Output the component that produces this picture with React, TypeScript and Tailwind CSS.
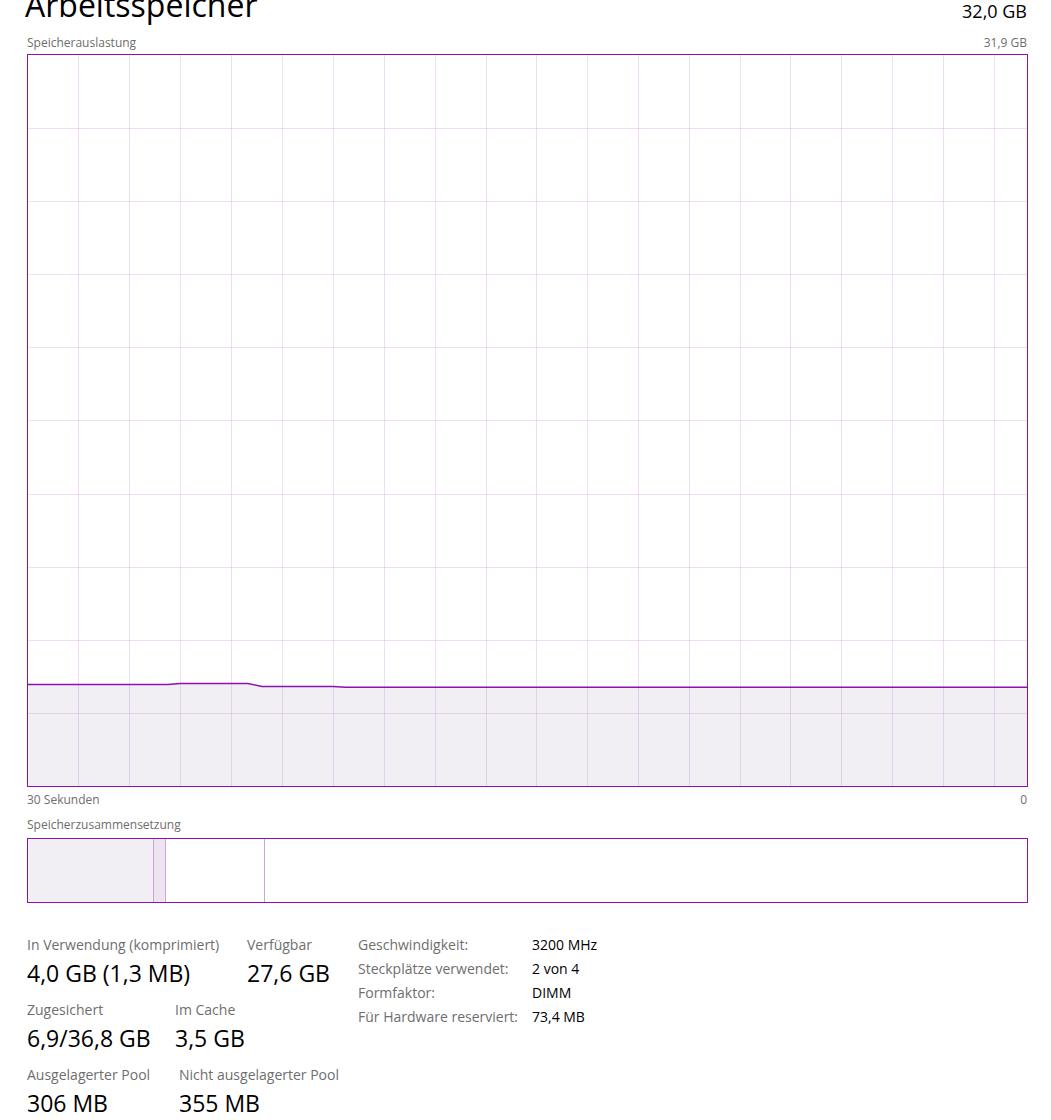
import React from "react";

const GRID_X = [78, 129, 180, 231, 282, 333, 384, 435, 486, 536, 587, 638, 689, 740, 790, 841, 892, 943, 994];
const GRID_Y = [128, 201, 274, 347, 420, 494, 567, 640, 713];
// absolute page coords of the usage line
const LINE: [number, number][] = [
  [27, 684.5],
  [168, 684.5],
  [180, 683.5],
  [248, 683.5],
  [262, 686.5],
  [333, 686.5],
  [346, 687.3],
  [1028, 687.3],
];

function Chart() {
  const ox = 28;
  const oy = 55;
  const pts = LINE.map(([x, y]) => `${x - ox},${y - oy}`).join(" ");
  const fill = `${pts} ${1028 - ox},${787 - oy} ${27 - ox},${787 - oy}`;
  return (
    <svg width="999" height="731" viewBox="0 0 999 731" className="block">
      <polygon points={fill} fill="#f2eff4" />
      {GRID_X.map((x) => (
        <line key={"x" + x} x1={x - ox + 0.5} x2={x - ox + 0.5} y1={0} y2={731} stroke="rgba(139,18,174,0.14)" strokeWidth={1} />
      ))}
      {GRID_Y.map((y) => (
        <line key={"y" + y} x1={0} x2={999} y1={y - oy + 0.5} y2={y - oy + 0.5} stroke="rgba(139,18,174,0.14)" strokeWidth={1} />
      ))}
      <polyline points={pts} fill="none" stroke="#8b12ae" strokeWidth={1.4} />
    </svg>
  );
}

function Stat({ label, value, w }: { label: string; value: string; w: string }) {
  return (
    <div className={`${w} flex flex-col`}>
      <div className="text-[14px] leading-[20px] text-[#6e6e6e] whitespace-nowrap">{label}</div>
      <div className="mt-1 text-[23px] leading-[28px] text-black whitespace-nowrap">{value}</div>
    </div>
  );
}

export default function App() {
  return (
    <div
      className="w-[1051px] h-[1120px] overflow-hidden bg-white"
      style={{ fontFamily: '"Open Sans", "Noto Sans", sans-serif' }}
    >
      <div className="ml-[27px] w-[1001px]">
        {/* Header */}
        <div className="h-[35px] flex justify-between items-start">
          <div className="-mt-[10px] -ml-[2px] text-[32px] leading-[30px] text-black whitespace-nowrap">Arbeitsspeicher</div>
          <div className="-mt-[1px] mr-[1px] text-[18px] leading-[24px] text-black whitespace-nowrap">32,0 GB</div>
        </div>
        <div className="flex justify-between text-[12px] leading-[16px] text-[#6e6e6e] mb-[3px]">
          <span>Speicherauslastung</span>
          <span className="mr-[1px]">31,9 GB</span>
        </div>
        {/* Graph */}
        <div className="w-[1001px] h-[733px] border border-[#8b12ae] bg-white">
          <Chart />
        </div>
        <div className="mt-[5px] flex justify-between text-[12px] leading-[16px] text-[#6e6e6e]">
          <span>30 Sekunden</span>
          <span className="mr-[1px]">0</span>
        </div>
        <div className="mt-[9px] text-[12px] leading-[16px] text-[#6e6e6e]">Speicherzusammensetzung</div>
        {/* Composition bar */}
        <div className="mt-[5px] w-[1001px] h-[65px] border border-[#8b12ae] flex">
          <div className="w-[126px] h-full bg-[#f2eff4] border-r border-[#cfa3dc]" />
          <div className="w-[12px] h-full bg-[#ede3f1] border-r border-[#cfa3dc]" />
          <div className="w-[99px] h-full bg-white border-r border-[#cfa3dc]" />
          <div className="flex-1 h-full bg-white" />
        </div>
        {/* Stats */}
        <div className="mt-[29px] flex items-start">
          <div className="w-[331px] pt-[3px] flex flex-col gap-[13px]">
            <div className="flex">
              <Stat w="w-[220px]" label="In Verwendung (komprimiert)" value="4,0 GB (1,3 MB)" />
              <Stat w="w-[100px]" label="Verfügbar" value="27,6 GB" />
            </div>
            <div className="flex">
              <Stat w="w-[148px]" label="Zugesichert" value="6,9/36,8 GB" />
              <Stat w="w-[100px]" label="Im Cache" value="3,5 GB" />
            </div>
            <div className="flex">
              <Stat w="w-[152px]" label="Ausgelagerter Pool" value="306 MB" />
              <Stat w="w-[170px]" label="Nicht ausgelagerter Pool" value="355 MB" />
            </div>
          </div>
          <div className="pt-[1px] grid grid-cols-[174px_auto] text-[14px] leading-[24px] whitespace-nowrap">
            <span className="text-[#6e6e6e]">Geschwindigkeit:</span>
            <span className="text-black">3200 MHz</span>
            <span className="text-[#6e6e6e]">Steckplätze verwendet:</span>
            <span className="text-black">2 von 4</span>
            <span className="text-[#6e6e6e]">Formfaktor:</span>
            <span className="text-black">DIMM</span>
            <span className="text-[#6e6e6e]">Für Hardware reserviert:</span>
            <span className="text-black">73,4 MB</span>
          </div>
        </div>
      </div>
    </div>
  );
}
